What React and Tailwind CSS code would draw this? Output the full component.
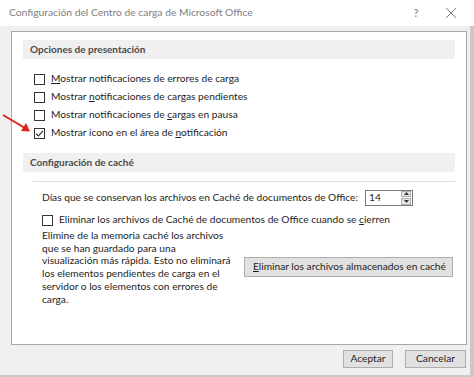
import React from 'react'

const FONT = { fontFamily: 'Lato, "Noto Sans", sans-serif' }

function Casilla({ marcada }) {
  return (
    <span className="w-[11px] h-[11px] border border-[#333333] bg-white flex items-center justify-center shrink-0">
      {marcada && (
        <svg width="9" height="9" viewBox="0 0 9 9">
          <path d="M1 4.6 L3.4 7 L8 1.8" fill="none" stroke="#222" strokeWidth="1.1" />
        </svg>
      )}
    </span>
  )
}

function Opcion({ marcada, children }) {
  return (
    <div className="h-[18px] flex items-center gap-[6px]">
      <Casilla marcada={marcada} />
      <span>{children}</span>
    </div>
  )
}

function Banda({ children }) {
  return (
    <div className="h-[19px] bg-[#f0f0f0] flex items-center pl-[7px] text-[10px] font-bold text-[#4a4a4a]">
      {children}
    </div>
  )
}

export default function App() {
  return (
    <div className="w-[474px] h-[377px] bg-[#f0f0f0] relative text-[10.2px] text-[#1e1e1e] overflow-hidden" style={FONT}>
      {/* barra de título */}
      <div className="h-[26px] bg-white flex items-center pl-[9px] text-[10.3px] text-[#808080]">
        <span className="flex-1">Configuración del Centro de carga de Microsoft Office</span>
        <span className="w-[20px] text-center mr-[19px] text-[11px]">?</span>
        <svg width="12" height="12" viewBox="0 0 12 12" className="mr-[17px]">
          <path d="M1 1 L11 11 M11 1 L1 11" stroke="#808080" strokeWidth="1" />
        </svg>
      </div>

      <div className="h-[351px] border-r-[4px] border-b-[2px] border-[#c9c9c9] pt-[5px] pl-[11px] flex flex-col">
        {/* panel blanco */}
        <div className="w-[456px] h-[314px] border border-[#a8a8a8] bg-white pt-[8px] pl-[11px] pr-[11px]">
          <Banda>Opciones de presentación</Banda>
          <div className="pl-[11px] mt-[11px]">
            <Opcion><span className="underline">M</span>ostrar notificaciones de errores de carga</Opcion>
            <Opcion>Mostrar <span className="underline">n</span>otificaciones de cargas pendientes</Opcion>
            <Opcion>Mostrar notificaciones de <span className="underline">c</span>argas en pausa</Opcion>
            <Opcion marcada>Mostrar icono en el área de <span className="underline">n</span>otificación</Opcion>
          </div>

          <div className="mt-[11px]">
            <Banda>Configuración de caché</Banda>
          </div>

          <div className="ml-[10px] mt-[9px] border-t border-[#dcdcdc] pl-[9px]">
            <div className="h-[29px] flex items-center pt-[2px]">
              <span className="whitespace-nowrap">Días que se conservan los archivos en Caché de documentos de Office:</span>
              <div className="ml-auto mr-[42px] w-[48px] h-[16px] border border-[#7a7a7a] flex items-center pl-[3px]">
                <span className="flex-1">14</span>
                <div className="w-[10px] h-[14px] flex flex-col gap-[1px] mr-[1px]">
                  <div className="flex-1 bg-[#e5e5e5] border border-[#b0b0b0] flex items-center justify-center">
                    <svg width="5" height="3" viewBox="0 0 5 3"><path d="M0 3 L2.5 0 L5 3 Z" fill="#333" /></svg>
                  </div>
                  <div className="flex-1 bg-[#e5e5e5] border border-[#b0b0b0] flex items-center justify-center">
                    <svg width="5" height="3" viewBox="0 0 5 3"><path d="M0 0 L2.5 3 L5 0 Z" fill="#333" /></svg>
                  </div>
                </div>
              </div>
            </div>
            <Opcion>Eliminar los archivos de Caché de documentos de Office cuando se <span className="underline">c</span>ierren</Opcion>

            <div className="flex items-center">
              <p className="w-[196px] leading-[12.7px] whitespace-nowrap">
                Elimine de la memoria caché los archivos<br />
                que se han guardado para una<br />
                visualización más rápida. Esto no eliminará<br />
                los elementos pendientes de carga en el<br />
                servidor o los elementos con errores de<br />
                carga.
              </p>
              <button className="ml-[6px] w-[209px] h-[20px] bg-[#e1e1e1] border border-[#adadad] text-left pl-[8px] text-[#1e1e1e] whitespace-nowrap">
                <span className="underline">E</span>liminar los archivos almacenados en caché
              </button>
            </div>
          </div>
        </div>

        {/* botones */}
        <div className="flex justify-end gap-[12px] mt-[5px] mr-[4px]">
          <button className="w-[50px] h-[18px] bg-[#e1e1e1] border border-[#adadad]">Aceptar</button>
          <button className="w-[61px] h-[18px] bg-[#e1e1e1] border border-[#adadad]">Cancelar</button>
        </div>
      </div>

      {/* flecha roja */}
      <svg className="absolute left-0 top-[112px]" width="34" height="24" viewBox="0 0 34 24">
        <path d="M3 3 L25 16" stroke="#e0201b" strokeWidth="2" />
        <path d="M30 19.5 L21 19 L26 11 Z" fill="#e0201b" />
      </svg>
    </div>
  )
}
